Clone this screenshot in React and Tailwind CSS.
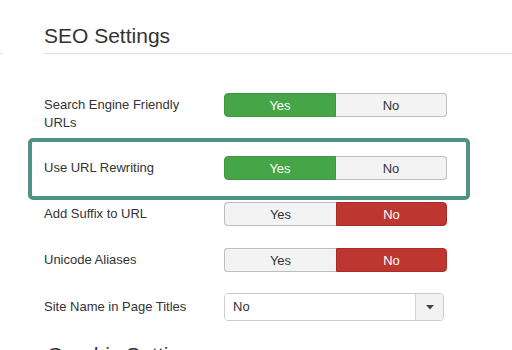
import React from "react";

function YesNo({ value }) {
  const yes = value === "yes";
  return (
    <div className="flex w-[223px] h-[24px] text-[13px] leading-none shrink-0">
      <div
        className={`w-[112px] flex items-center justify-center rounded-l-[4px] border ${
          yes ? "bg-[#46a546] border-[#3e963e] text-white" : "bg-[#f3f3f3] border-[#bdbdbd] border-r-0 text-[#333]"
        }`}
      >
        Yes
      </div>
      <div
        className={`flex-1 flex items-center justify-center rounded-r-[4px] border ${
          yes ? "bg-[#f3f3f3] border-[#bdbdbd] border-l-0 text-[#333]" : "bg-[#bd362f] border-[#a52e28] text-white"
        }`}
      >
        No
      </div>
    </div>
  );
}

function Row({ label, children, className = "" }) {
  return (
    <div className={`flex items-center ${className}`}>
      <div className="w-[180px] shrink-0 pr-4 text-[13px] leading-[18px] text-[#333]">{label}</div>
      {children}
    </div>
  );
}

export default function App() {
  return (
    <div className="w-[512px] h-[350px] overflow-hidden bg-white text-[#333]" style={{ fontFamily: '"Liberation Sans", Arial, sans-serif' }}>
      <div className="flex items-end">
        <div className="w-[3px] border-b border-[#e2e2e2]" />
        <h2 className="ml-[41px] flex-1 pt-[24px] pb-[5px] border-b border-[#e2e2e2] text-[21px] leading-[24px] font-normal">
          SEO Settings
        </h2>
      </div>

      <div className="pl-[44px] flex flex-col">
        <div className="flex items-start mt-[39px]">
          <div className="w-[180px] shrink-0 pt-[3px] pr-4 text-[13px] leading-[18px] text-[#333]">
            Search Engine Friendly<br />URLs
          </div>
          <YesNo value="yes" />
        </div>

        <div className="-ml-[16px] mt-[6px] w-[442px] border-4 border-[#4e9383] rounded-[5px] pl-[12px] pt-[14px] pb-[16px]">
          <div className="flex items-center">
            <div className="w-[180px] shrink-0 text-[13px] leading-[18px] text-[#333]">Use URL Rewriting</div>
            <YesNo value="yes" />
          </div>
        </div>

        <Row label="Add Suffix to URL" className="mt-[2px]">
          <YesNo value="no" />
        </Row>

        <Row label="Unicode Aliases" className="mt-[22px]">
          <YesNo value="no" />
        </Row>

        <Row label="Site Name in Page Titles" className="mt-[21px]">
          <div className="flex w-[220px] h-[28px] border border-[#cccccc] rounded-[4px] text-[13px] overflow-hidden">
            <div className="flex-1 flex items-center pl-[8px] bg-white">No</div>
            <div className="w-[28px] flex items-center justify-center bg-[#f2f2f2] border-l border-[#d4d4d4]">
              <svg width="8" height="5" viewBox="0 0 8 5">
                <path d="M0 0 H8 L4 4.5 Z" fill="#444" />
              </svg>
            </div>
          </div>
        </Row>

        <h2 className="ml-[3px] mt-[22px] text-[21px] leading-[24px] font-normal">Graphic Settings</h2>
      </div>
    </div>
  );
}
